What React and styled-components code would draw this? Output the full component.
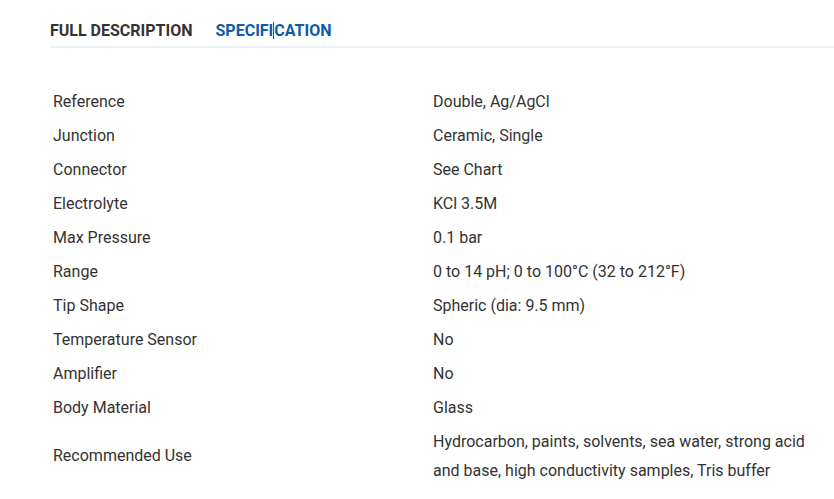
import React from "react";
import styled, { createGlobalStyle } from "styled-components";

const Global = createGlobalStyle`
  html, body { margin: 0; padding: 0; background: #fff; }
  body { font-family: Roboto, "Liberation Sans", Arial, sans-serif; }
`;

const Page = styled.div`
  padding-left: 50px;
  width: 784px;
`;

const Tabs = styled.div`
  display: flex;
  gap: 23px;
  height: 46px;
  align-items: flex-start;
  border-bottom: 2px solid #eef1f5;
  box-sizing: content-box;
`;

const Tab = styled.div`
  font-size: 16px;
  font-weight: 700;
  line-height: 20px;
  padding-top: 21px;
  color: ${(p) => (p.$active ? "#0d5bab" : "#333333")};
`;

const Caret = styled.span`
  display: inline-block;
  width: 0;
  height: 17px;
  border-left: 1px solid #0d5bab;
  vertical-align: -3px;
`;

const Table = styled.div`
  margin-top: 36px;
  display: grid;
  grid-template-columns: 380px 1fr;
  font-size: 16px;
  color: #333333;
`;

const Cell = styled.div`
  padding: 2.5px 3px;
  line-height: 29px;
  display: flex;
  align-items: center;
`;

const rows = [
  ["Reference", "Double, Ag/AgCl"],
  ["Junction", "Ceramic, Single"],
  ["Connector", "See Chart"],
  ["Electrolyte", "KCl 3.5M"],
  ["Max Pressure", "0.1 bar"],
  ["Range", "0 to 14 pH; 0 to 100°C (32 to 212°F)"],
  ["Tip Shape", "Spheric (dia: 9.5 mm)"],
  ["Temperature Sensor", "No"],
  ["Amplifier", "No"],
  ["Body Material", "Glass"],
  [
    "Recommended Use",
    "Hydrocarbon, paints, solvents, sea water, strong acid and base, high conductivity samples, Tris buffer",
  ],
];

export default function App() {
  return (
    <Page>
      <Global />
      <Tabs>
        <Tab>FULL DESCRIPTION</Tab>
        <Tab $active>
          SPECIFI<Caret />CATION
        </Tab>
      </Tabs>
      <Table>
        {rows.map(([k, v]) => (
          <React.Fragment key={k}>
            <Cell>{k}</Cell>
            <Cell>{v}</Cell>
          </React.Fragment>
        ))}
      </Table>
    </Page>
  );
}
